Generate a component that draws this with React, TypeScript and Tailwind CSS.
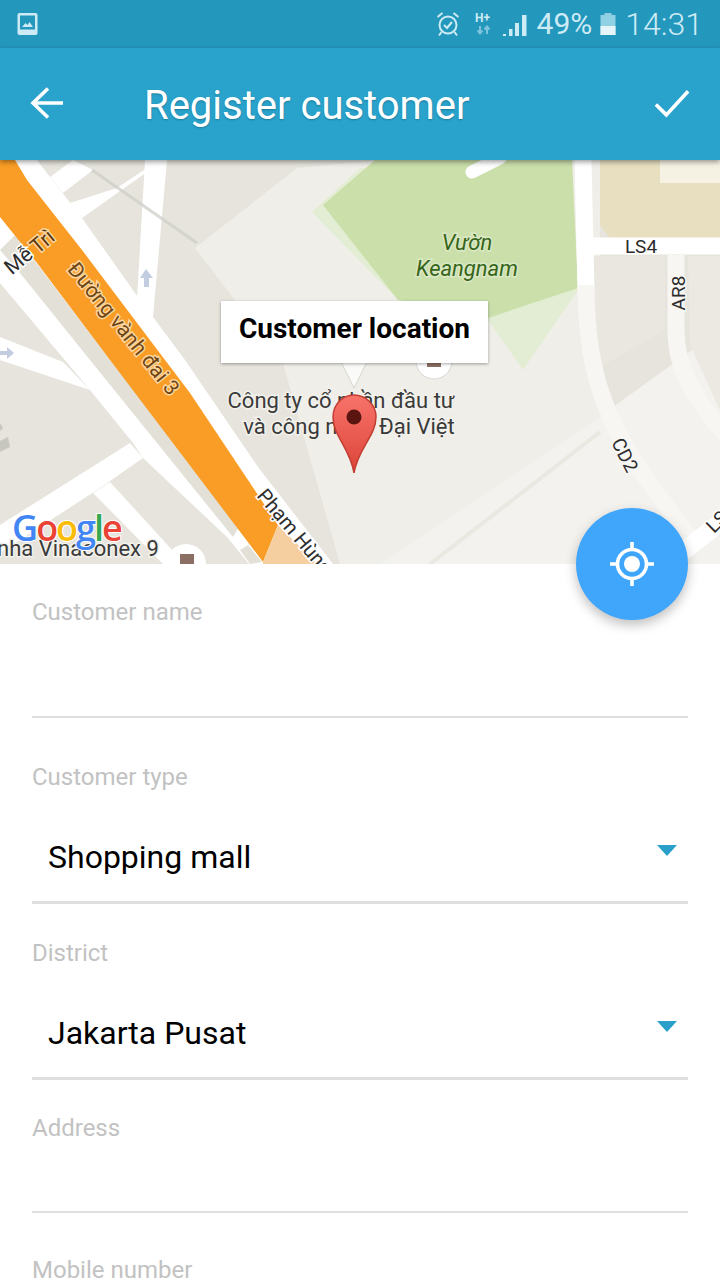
const roboto = "font-['Roboto',sans-serif]";

function StatusBar() {
  return (
    <div className="flex h-12 shrink-0 items-center justify-between bg-[#2497bd] pl-[17px] pr-[17px] text-[#cdebf4]">
      <svg width="21" height="24" viewBox="0 0 21 24">
        <rect x="0.5" y="1" width="20" height="22" rx="2" fill="#cdebf4" />
        <rect x="3" y="3.5" width="15" height="14" fill="#2497bd" />
        <path d="M5 15l3.5-4 2 2 2-3 3.5 5z" fill="#cdebf4" />
      </svg>
      <div className="flex items-center">
        <svg width="26" height="28" viewBox="0 0 26 28" fill="none" stroke="#cdebf4" strokeWidth="2">
          <circle cx="13" cy="15" r="8.5" />
          <path d="M9 15l3 3 5-6" />
          <path d="M2.5 7l5-4M23.5 7l-5-4M6.5 22l-2.5 3.5M19.5 22l2.5 3.5" />
        </svg>
        <svg width="20" height="26" viewBox="0 0 20 26" className="ml-[14px]">
          <text x="0" y="11" fontSize="12" fontWeight="700" fill="#cdebf4" fontFamily="Roboto, sans-serif">H+</text>
          <path d="M5 15v7M2.5 19.5L5 22.5l2.5-3M12 23v-7M9.5 18.5L12 15.5l2.5 3" stroke="#7cc4dc" strokeWidth="2" fill="none" />
        </svg>
        <svg width="26" height="22" viewBox="0 0 26 22" className="ml-[7px] mt-[4px]">
          <path d="M1 19h3v2H1zM7 14h3.5v7H7zM13 8h4v13h-4zM20 0h4.5v21H20z" fill="#cdebf4" />
        </svg>
        <span className={`${roboto} ml-[9px] text-[30px] leading-none`}>49%</span>
        <svg width="16" height="22" viewBox="0 0 16 22" className="ml-[8px]">
          <rect x="4.5" y="0" width="7" height="3" fill="#8fd0e4" />
          <rect x="0.5" y="2" width="15" height="20" fill="#8fd0e4" />
          <rect x="0.5" y="13" width="15" height="9" fill="#e6f5fa" />
        </svg>
        <span className={`${roboto} ml-[9px] text-[32px] font-light leading-none`}>14:31</span>
      </div>
    </div>
  );
}

function AppBar() {
  return (
    <div className="relative z-10 flex h-28 shrink-0 items-center bg-[#29a3cc] pl-[30px] pr-[30px] shadow-[0_2px_5px_rgba(0,0,0,0.4)]">
      <svg width="34" height="34" viewBox="0 0 34 34" fill="none" stroke="white" strokeWidth="3.6" className="mb-[2px]">
        <path d="M33 17H4M18 2.5L3 17l15 14.5" />
      </svg>
      <h1 className={`${roboto} ml-[80px] pt-1 text-[40px] font-normal leading-none text-white [text-shadow:0_1px_2px_rgba(0,0,0,0.25)]`}>
        Register customer
      </h1>
      <svg width="36" height="29" viewBox="0 0 38 30" fill="none" stroke="white" strokeWidth="3.8" className="ml-auto mb-[2px]">
        <path d="M2 16l11 11L36 2" />
      </svg>
    </div>
  );
}

function MapLabel({ x, y, rotate, size = 20, fill = "#2c2c2c", halo = "#f2f1ec", italic, anchor = "middle", children }: { x: number; y: number; rotate?: number; size?: number; fill?: string; halo?: string; italic?: boolean; anchor?: "middle" | "start"; children: string }) {
  return (
    <text
      x={x}
      y={y}
      fontSize={size}
      fill={fill}
      stroke={halo}
      strokeWidth="3"
      textAnchor={anchor}
      fontStyle={italic ? "italic" : undefined}
      fontFamily="Roboto, sans-serif"
      transform={rotate ? `rotate(${rotate} ${x} ${y})` : undefined}
      className="[paint-order:stroke]"
    >
      {children}
    </text>
  );
}

function MapPanel() {
  return (
    <div className="relative h-[404px] shrink-0 overflow-hidden">
      <svg width="720" height="404" viewBox="0 160 720 404" className="block">
        <defs>
          <linearGradient id="pin" x1="0" y1="0" x2="0" y2="1">
            <stop offset="0" stopColor="#f8736a" />
            <stop offset="1" stopColor="#dc4438" />
          </linearGradient>
        </defs>
        <rect x="0" y="160" width="720" height="404" fill="#e6e4dc" />

        {/* pale campus blocks */}
        <path d="M195 248L297 168L380 160H600V564H340L283 363Z" fill="#efeee8" />
        <path d="M380 564L595 420L720 330V564Z" fill="#f3f2ee" />
        <path d="M592 256H665V330L592 372Z" fill="#e9e7df" />
        <path d="M688 256H720V410L690 345Z" fill="#ebe9e2" />
        <path d="M430 564L600 432" stroke="#e9e8e1" strokeWidth="4" fill="none" />

        {/* park */}
        <path d="M312 212L360 168H572L578 290L523 370L488 320L398 300Z" fill="#e3edd3" />
        <path d="M323 205L375 160H572L578 288L488 318L398 300Z" fill="#cbdfab" />
        <path d="M472 172L500 158" stroke="white" strokeWidth="13" strokeLinecap="round" />

        {/* tan building */}
        <path d="M600 160H720V238H610L600 225Z" fill="#e8dfc0" />
        <rect x="660" y="160" width="60" height="23" fill="#f5f1e3" />

        {/* right side roads */}
        <path d="M583 160L586 290" stroke="white" strokeWidth="17" fill="none" />
        <path d="M586 285C586 360 600 410 640 470L695 545" stroke="#f7f6f3" strokeWidth="17" fill="none" />
        <path d="M592 246H720" stroke="white" strokeWidth="17" />
        <path d="M676 255V330C676 370 695 400 730 440" stroke="#f7f6f3" strokeWidth="17" fill="none" />
        <path d="M672 560L730 515" stroke="white" strokeWidth="18" />

        {/* left side roads */}
        <path d="M145 160H167L153 317H136Z" fill="white" />
        <path d="M50 177L73 160L93 170L63 193Z" fill="white" />
        <path d="M70 203L117 188L147 168V172L82 218Z" fill="white" />
        <path d="M0 337L63 362L90 390L0 360Z" fill="white" />
        <path d="M130 443L0 525V553L100 488L143 458Z" fill="white" />
        <path d="M93 493L110 482L185 564H163Z" fill="white" />
        <path d="M0 283L90 390L133 443L143 458L227 537L262 580H340L333 564L258 467L185 360L153 317L135 293L82 218L50 177L37 160H0Z" fill="white" />
        <path d="M0 250L15 235L110 360L240 525L233 537L90 360L20 273Z" fill="#e2e0d7" />
        <path d="M240 550L248 545L262 562L250 564Z" fill="#e2e0d7" />
        <path d="M0 423L3 428L0 431ZM0 441L8 437L10 447L0 452Z" fill="#c8c7bf" />
        <path d="M0 160H15L27 180L82 250L165 360L190 393L278 525L263 562L110 360L37 263L0 217Z" fill="#f99d26" />
        <path d="M263 562L278 525L317 564H263Z" fill="#f5cf9f" />
        <path d="M92 170L197 243" stroke="#cfcfca" strokeWidth="3" fill="none" opacity="0.8" />
        <path d="M146 269l-6 9h4v9h5v-9h4z" fill="#c3cde0" />
        <path d="M14 353l-7-6v4H0v4h7v4z" fill="#c3cde0" />

        {/* POI markers */}
        <circle cx="186" cy="564" r="20" fill="white" />
        <rect x="180" y="554" width="14" height="12" fill="#8c6f64" />
        <circle cx="434" cy="361" r="18" fill="white" stroke="#d8d7d1" />
        <rect x="427" y="360" width="14" height="7" fill="#8c6f64" />

        {/* labels */}
        <MapLabel x={23} y={266} rotate={-40} size={21} halo="#ffffff">Mễ</MapLabel>
        <MapLabel x={47} y={247} rotate={-40} size={21} fill="#5d3a10" halo="#fcd69e">Trì</MapLabel>
        <MapLabel x={118} y={333} rotate={51} size={21} fill="#6f4512" halo="#fcd69e">Đường vành đai 3</MapLabel>
        <MapLabel x={256} y={496} rotate={50} size={20} anchor="start" halo="#ffffff">Phạm Hùng</MapLabel>
        <MapLabel x={341} y={408} size={22} fill="#3a3a3a">Công ty cổ phần đầu tư</MapLabel>
        <MapLabel x={349} y={434} size={22} fill="#3a3a3a">và công nghệ Đại Việt</MapLabel>
        <MapLabel x={467} y={250} size={22} italic fill="#35651a" halo="#dbe8c4">Vườn</MapLabel>
        <MapLabel x={467} y={276} size={22} italic fill="#35651a" halo="#dbe8c4">Keangnam</MapLabel>
        <MapLabel x={641} y={253} size={19} halo="#ffffff">LS4</MapLabel>
        <MapLabel x={685} y={293} rotate={-90} size={19} halo="#f7f6f3">AR8</MapLabel>
        <MapLabel x={619} y={458} rotate={63} size={19} halo="#f7f6f3">CD2</MapLabel>
        <MapLabel x={714} y={534} rotate={-45} size={19} anchor="start" halo="#ffffff">LS</MapLabel>
        <MapLabel x={-3} y={556} size={22} anchor="start" fill="#3a3a3a" halo="#f2f1ec">nha Vinaconex 9</MapLabel>

        {/* google logo */}
        <text x="12" y="541" fontSize="36" fontWeight="600" fontFamily="'Open Sans', sans-serif" stroke="white" strokeWidth="2" letterSpacing="-2" className="[paint-order:stroke]">
          <tspan fill="#4285f4">G</tspan>
          <tspan fill="#ea4335">o</tspan>
          <tspan fill="#fbbc05">o</tspan>
          <tspan fill="#4285f4">g</tspan>
          <tspan fill="#34a853">l</tspan>
          <tspan fill="#ea4335">e</tspan>
        </text>

        {/* callout tail */}
        <path d="M341 362L354 388L367 362Z" fill="#fafaf8" stroke="#d5d4ce" strokeWidth="1" />

        {/* pin */}
        <path d="M354 473C350 448 333 436 333 417C333 405 342 395 354 395C366 395 376 405 376 417C376 436 358 448 354 473Z" fill="url(#pin)" stroke="#c23d32" strokeWidth="1.5" />
        <circle cx="354" cy="417" r="7.5" fill="#5a1510" />
      </svg>

      <div className={`${roboto} absolute left-[221px] top-[141px] flex h-[62px] w-[267px] items-center justify-center bg-white pb-[6px] text-[28px] font-bold text-black shadow-[0_1px_3px_rgba(0,0,0,0.35)]`}>
        Customer location
      </div>
    </div>
  );
}

function Label({ children, className }: { children: string; className: string }) {
  return <div className={`${roboto} h-7 text-[24px] leading-7 text-[#c2c2c2] ${className}`}>{children}</div>;
}

function SelectValue({ value }: { value: string }) {
  return (
    <div className="mt-[43px] flex h-[46px] items-center pl-4 pr-[11px]">
      <span className={`${roboto} text-[32px] leading-none text-black`}>{value}</span>
      <div className="ml-auto mb-[14px] h-0 w-0 border-x-[10px] border-t-[11px] border-x-transparent border-t-[#2a9fc9]" />
    </div>
  );
}

function Form() {
  return (
    <div className="px-8">
      <Label className="mt-[34px]">Customer name</Label>
      <div className="mt-[90px] h-[2px] bg-[#dedede]" />
      <Label className="mt-[45px]">Customer type</Label>
      <SelectValue value="Shopping mall" />
      <div className="mt-[21px] h-[3px] bg-[#dedede]" />
      <Label className="mt-[35px]">District</Label>
      <SelectValue value="Jakarta Pusat" />
      <div className="mt-[21px] h-[3px] bg-[#dedede]" />
      <Label className="mt-[34px]">Address</Label>
      <div className="mt-[69px] h-[2px] bg-[#dedede]" />
      <Label className="mt-[43px]">Mobile number</Label>
    </div>
  );
}

export default function App() {
  return (
    <div className="relative flex h-[1280px] w-[720px] flex-col overflow-hidden bg-white">
      <StatusBar />
      <AppBar />
      <MapPanel />
      <Form />
      <button className="absolute left-[576px] top-[508px] z-10 flex h-[112px] w-[112px] items-center justify-center rounded-full bg-[#3fa6fb] shadow-[0_5px_12px_rgba(0,0,0,0.25)]">
        <svg width="46" height="46" viewBox="0 0 46 46" fill="none" stroke="white">
          <circle cx="23" cy="23" r="14.5" strokeWidth="3.6" />
          <circle cx="23" cy="23" r="8" fill="white" stroke="none" />
          <path d="M23 1v8M23 37v8M1 23h8M37 23h8" strokeWidth="3.6" />
        </svg>
      </button>
    </div>
  );
}
